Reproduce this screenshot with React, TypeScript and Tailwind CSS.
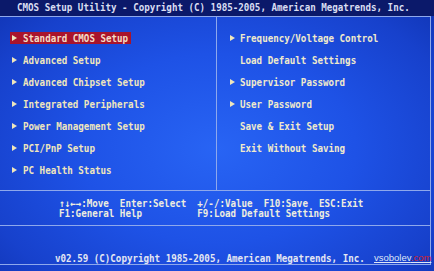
import React from "react";

const left = [
  "Standard CMOS Setup",
  "Advanced Setup",
  "Advanced Chipset Setup",
  "Integrated Peripherals",
  "Power Management Setup",
  "PCI/PnP Setup",
  "PC Health Status",
];

const right: { label: string; arrow: boolean }[] = [
  { label: "Frequency/Voltage Control", arrow: true },
  { label: "Load Default Settings", arrow: false },
  { label: "Supervisor Password", arrow: true },
  { label: "User Password", arrow: true },
  { label: "Save & Exit Setup", arrow: false },
  { label: "Exit Without Saving", arrow: false },
];

function Arrow({ show = true }: { show?: boolean }) {
  return (
    <svg width="5" height="6" viewBox="0 0 5 6" className="shrink-0">
      {show && <polygon points="0,0 5,3 0,6" fill="#efe6bc" />}
    </svg>
  );
}

function T({ children, tight = false }: { children: React.ReactNode; tight?: boolean }) {
  return (
    <span className={`inline-block whitespace-pre ${tight ? "scale-y-[1.1]" : "scale-y-[1.2]"}`}>
      {children}
    </span>
  );
}

export default function App() {
  return (
    <div
      className="relative w-[434px] h-[271px] overflow-hidden bg-[radial-gradient(ellipse_at_50%_55%,#2864f4_0%,#1e52e6_45%,#1741cc_80%,#1034b4_100%)] font-bold text-[9.2px]"
      style={{ fontFamily: '"DejaVu Sans Mono", "Liberation Mono", monospace' }}
    >
      <div className="h-[16px] bg-[#0b196a] pl-[17px] leading-[14px] text-[#d9def2]">
        <T>CMOS Setup Utility - Copyright (C) 1985-2005, American Megatrends, Inc.</T>
      </div>

      <div className="w-[431px] border-t border-r border-[#8ea8ec] flex flex-col">
        <div className="h-[173px] flex">
          <div className="w-[216px] pt-[10px]">
            {left.map((item, i) => (
              <div key={item} className="h-[22px] flex items-center pl-[10px]">
                <div
                  className={`h-[12px] flex items-center gap-[6px] pl-[2px] pr-[3px] ${
                    i === 0 ? "bg-[#a8142c] text-[#f4dcc6]" : "text-[#efe6bc]"
                  }`}
                >
                  <Arrow />
                  <T>{item}</T>
                </div>
              </div>
            ))}
          </div>
          <div className="flex-1 border-l border-[#8ea8ec] pt-[10px]">
            {right.map((item) => (
              <div key={item.label} className="h-[22px] flex items-center gap-[5px] pl-[13px] text-[#f0eacb]">
                <Arrow show={item.arrow} />
                <T>{item.label}</T>
              </div>
            ))}
          </div>
        </div>

        <div className="h-[35px] border-t border-[#8ea8ec] pt-[8px] pl-[59px] leading-[10px] text-[#eeedde]">
          <div>
            <T tight>{"↑↓←→:Move  Enter:Select  +/-/:Value  F10:Save  ESC:Exit"}</T>
          </div>
          <div>
            <T tight>{"F1:General Help          F9:Load Default Settings"}</T>
          </div>
        </div>

        <div className="h-[40px] border-t border-b border-[#8ea8ec] pt-[27px] pl-[55px] leading-[10px] text-[#e4e7f2]">
          <T>v02.59 (C)Copyright 1985-2005, American Megatrends, Inc.</T>
        </div>
      </div>

      <div
        className="absolute left-[374px] top-[252px] text-[9.5px] font-normal leading-[12px] underline text-[#dfe6f6]"
        style={{ fontFamily: '"Liberation Sans", Arial, sans-serif' }}
      >
        vsobolev<span className="text-[#d3222c]">.com</span>
      </div>
    </div>
  );
}
